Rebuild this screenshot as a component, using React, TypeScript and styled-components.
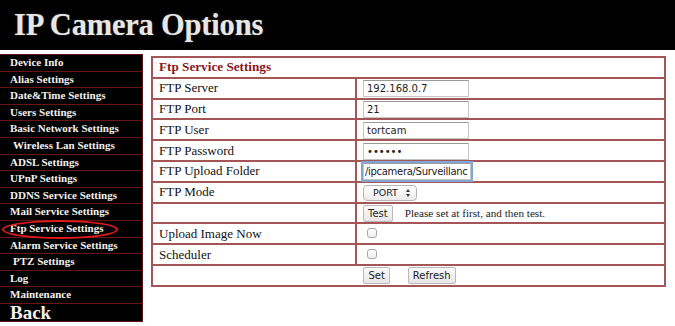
import { ReactElement } from 'react'
import styled, { createGlobalStyle } from 'styled-components'

const GlobalStyle = createGlobalStyle`
  html, body {
    margin: 0;
    padding: 0;
    background: #ffffff;
    font-family: 'Liberation Serif', 'Times New Roman', serif;
  }
`

const Page = styled.div`
  width: 675px;
  height: 326px;
  overflow: hidden;
`

const Header = styled.header`
  height: 50px;
  background: #000;
  display: flex;
  align-items: center;
  padding-left: 14px;
`

const Title = styled.h1`
  margin: 0;
  font-size: 30.5px;
  font-weight: bold;
  color: #e8e6e4;
  letter-spacing: -0.2px;
  text-shadow: 0 0 2px rgba(255, 255, 255, 0.25);
`

const Body = styled.div`
  display: flex;
  align-items: flex-start;
`

const Sidebar = styled.nav`
  margin-top: 4px;
  width: 142px;
  background: #000;
  border: 1px solid #5e1010;
  border-left: none;
  display: flex;
  flex-direction: column;
`

const NavItem = styled.div<{ $big?: boolean; $indent?: boolean }>`
  position: relative;
  height: ${(p) => (p.$big ? '17px' : '15.6px')};
  line-height: ${(p) => (p.$big ? '17px' : '15.6px')};
  padding-left: ${(p) => (p.$indent ? '13px' : '10px')};
  border-bottom: 1px solid #6a1414;
  color: #f2f0ee;
  font-weight: bold;
  font-size: ${(p) => (p.$big ? '19px' : '11px')};
  white-space: nowrap;

  &:last-child {
    border-bottom: none;
  }
`

const Circle = styled.span`
  position: absolute;
  left: 2px;
  top: -1px;
  width: 112px;
  height: 15px;
  border: 2px solid #e0191c;
  border-radius: 50%;
  pointer-events: none;
`

const Main = styled.main`
  margin-left: 8px;
  margin-top: 6px;
`

const Table = styled.table`
  width: 515px;
  border-collapse: collapse;
  border: 2px solid #a45555;
`

const Cell = styled.td<{ $center?: boolean }>`
  border: 2px solid #a45555;
  height: 18.8px;
  padding: 0 0 0 6px;
  font-size: 13px;
  color: #111;
  text-align: ${(p) => (p.$center ? 'center' : 'left')};
  vertical-align: middle;
`

const LabelCell = styled(Cell)`
  width: 196px;
`

const HeadCell = styled.th`
  border: 2px solid #a45555;
  height: 18.8px;
  padding: 0 0 0 6px;
  text-align: left;
  font-size: 13.2px;
  font-weight: bold;
  color: #8a1616;
`

const TextInput = styled.input<{ $focus?: boolean }>`
  box-sizing: border-box;
  width: ${(p) => (p.$focus ? '108px' : '106px')};
  height: 17px;
  margin: 1px 0 0;
  padding: ${(p) => (p.$focus ? '0 1px' : '0 3px')};
  font-family: 'DejaVu Sans', Verdana, sans-serif;
  font-size: 10px;
  letter-spacing: ${(p) => (p.$focus ? '-0.3px' : '0')};
  color: #222;
  border: 1px solid #c4c4c4;
  border-top-color: #9a9a9a;
  background: #fff;
  outline: none;
  box-shadow: ${(p) => (p.$focus ? '0 0 0 2px #7fa6d6' : 'none')};
`

const Select = styled.div`
  display: inline-flex;
  align-items: center;
  gap: 8px;
  box-sizing: border-box;
  height: 16px;
  margin-top: 1px;
  padding: 0 6px 0 9px;
  border: 1px solid #b5b5b5;
  border-radius: 4px;
  font-family: 'DejaVu Sans', Verdana, sans-serif;
  font-size: 9.5px;
  color: #222;
  background: linear-gradient(#ffffff, #ececec);
`

const Button = styled.button`
  box-sizing: border-box;
  height: 17px;
  margin-top: 1px;
  padding: 0 4px;
  border: 1px solid #b9b9b9;
  border-radius: 2px;
  background: linear-gradient(#fbfbfb, #e6e6e6);
  font-family: 'DejaVu Sans', Verdana, sans-serif;
  font-size: 10px;
  color: #222;
`

const Hint = styled.span`
  margin-left: 12px;
  font-size: 11.2px;
  color: #222;
`

const Check = styled.span`
  display: inline-block;
  box-sizing: border-box;
  width: 10px;
  height: 10px;
  margin: 3px 0 0 4px;
  border: 1px solid #a8a8a8;
  border-radius: 3px;
  background: linear-gradient(#ffffff, #eeeeee);
`

const Caret = styled.span`
  display: inline-block;
  width: 0;
  height: 0;
  border: 2px solid transparent;
  border-bottom: 3px solid #333;
  border-top: 0;
`

const Arrows = styled.span`
  display: inline-flex;
  flex-direction: column;
  gap: 2px;

  & > span:last-child {
    transform: rotate(180deg);
  }
`

const Actions = styled.div`
  display: flex;
  justify-content: center;
  gap: 18px;
  padding-right: 4px;
`

const navItems: { label: string; indent?: boolean }[] = [
  { label: 'Device Info' },
  { label: 'Alias Settings' },
  { label: 'Date&Time Settings' },
  { label: 'Users Settings' },
  { label: 'Basic Network Settings' },
  { label: 'Wireless Lan Settings', indent: true },
  { label: 'ADSL Settings' },
  { label: 'UPnP Settings' },
  { label: 'DDNS Service Settings' },
  { label: 'Mail Service Settings' },
  { label: 'Ftp Service Settings' },
  { label: 'Alarm Service Settings' },
  { label: 'PTZ Settings', indent: true },
  { label: 'Log' },
  { label: 'Maintenance' },
]

const fields: { label: string; value: string; focus?: boolean }[] = [
  { label: 'FTP Server', value: '192.168.0.7' },
  { label: 'FTP Port', value: '21' },
  { label: 'FTP User', value: 'tortcam' },
  { label: 'FTP Password', value: '••••••' },
  { label: 'FTP Upload Folder', value: '/ipcamera/Surveillanc', focus: true },
]

const App = (): ReactElement => (
  <Page>
    <GlobalStyle />
    <Header>
      <Title>IP Camera Options</Title>
    </Header>
    <Body>
      <Sidebar>
        {navItems.map((item) => (
          <NavItem key={item.label} $indent={item.indent}>
            {item.label}
            {item.label === 'Ftp Service Settings' && <Circle />}
          </NavItem>
        ))}
        <NavItem $big>Back</NavItem>
      </Sidebar>
      <Main>
        <Table>
          <tbody>
            <tr>
              <HeadCell colSpan={2}>Ftp Service Settings</HeadCell>
            </tr>
            {fields.map((f) => (
              <tr key={f.label}>
                <LabelCell>{f.label}</LabelCell>
                <Cell>
                  <TextInput readOnly value={f.value} $focus={f.focus} />
                </Cell>
              </tr>
            ))}
            <tr>
              <LabelCell>FTP Mode</LabelCell>
              <Cell>
                <Select>
                  PORT
                  <Arrows>
                    <Caret />
                    <Caret />
                  </Arrows>
                </Select>
              </Cell>
            </tr>
            <tr>
              <LabelCell />
              <Cell>
                <Button>Test</Button>
                <Hint>Please set at first, and then test.</Hint>
              </Cell>
            </tr>
            <tr>
              <LabelCell>Upload Image Now</LabelCell>
              <Cell>
                <Check />
              </Cell>
            </tr>
            <tr>
              <LabelCell>Scheduler</LabelCell>
              <Cell>
                <Check />
              </Cell>
            </tr>
            <tr>
              <Cell colSpan={2} $center>
                <Actions>
                  <Button>Set</Button>
                  <Button>Refresh</Button>
                </Actions>
              </Cell>
            </tr>
          </tbody>
        </Table>
      </Main>
    </Body>
  </Page>
)

export default App
